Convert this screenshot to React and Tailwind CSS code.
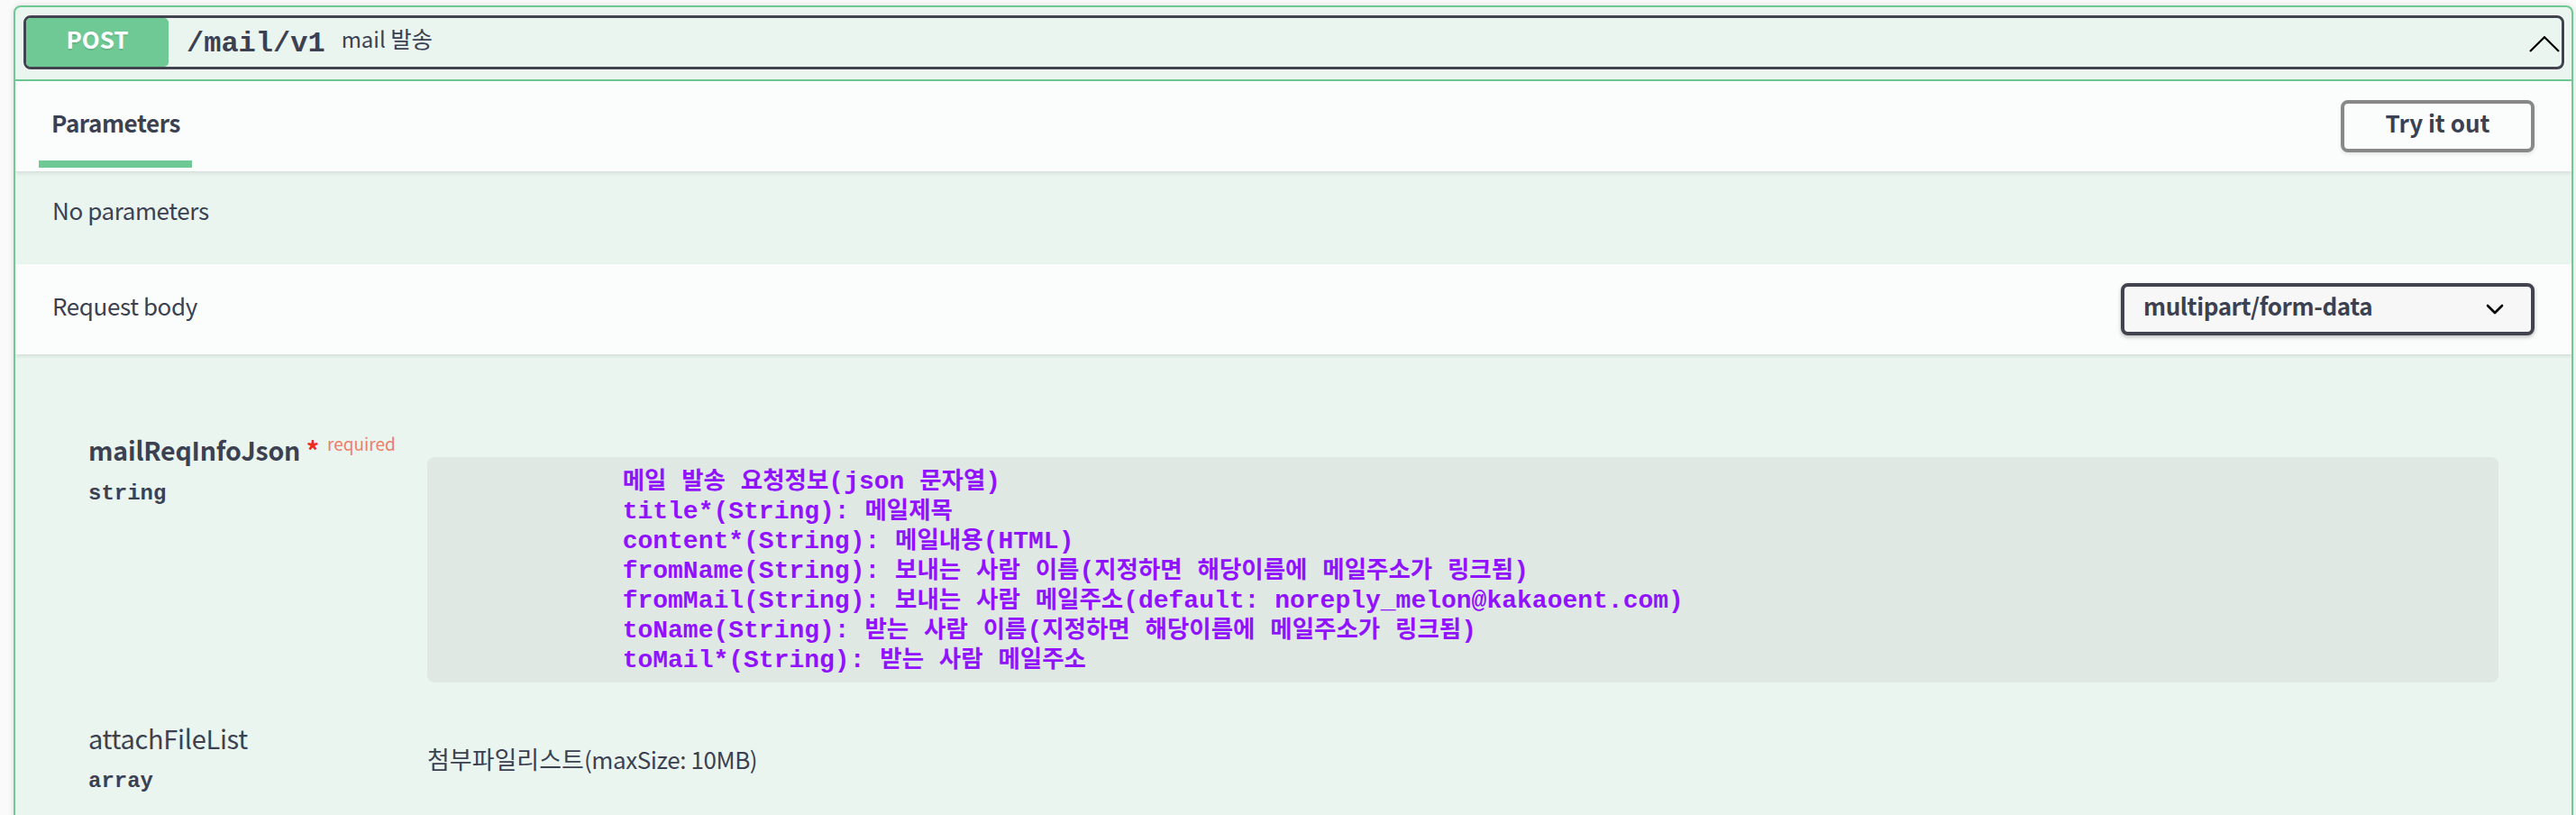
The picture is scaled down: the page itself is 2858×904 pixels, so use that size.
import React from "react";

const HANGUL_SPLIT = /([\uAC00-\uD7A3\u3131-\u318E]+)/;
const HANGUL_TEST = /[\uAC00-\uD7A3\u3131-\u318E]/;

function K({ text, cls }) {
  return text.split(HANGUL_SPLIT).map((part, i) =>
    HANGUL_TEST.test(part) ? (
      <span key={i} className={cls}>
        {part}
      </span>
    ) : (
      <React.Fragment key={i}>{part}</React.Fragment>
    )
  );
}

const SANS_KO = "text-[27px] leading-none tracking-normal";
const DESC_KO = "text-[25.5px] leading-none tracking-normal";
const CODE_KO = "inline-block font-['Noto_Sans_CJK_KR',sans-serif] text-[26.5px] leading-[24px] font-bold";

const codeLines = [
  "            메일 발송 요청정보(json 문자열)",
  "            title*(String): 메일제목",
  "            content*(String): 메일내용(HTML)",
  "            fromName(String): 보내는 사람 이름(지정하면 해당이름에 메일주소가 링크됨)",
  "            fromMail(String): 보내는 사람 메일주소(default: noreply_melon@kakaoent.com)",
  "            toName(String): 받는 사람 이름(지정하면 해당이름에 메일주소가 링크됨)",
  "            toMail*(String): 받는 사람 메일주소",
];

export default function App() {
  return (
    <div className="bg-[#fafafa] pt-[6px] pl-[15px] pr-[3px] pb-[20px] font-['Noto_Sans_CJK_KR',sans-serif] text-[#3b4151]">
      <div className="border-2 border-[#6fc994] rounded-[8px] bg-[#ebf5f0] shadow-[0_0_6px_rgba(0,0,0,0.12)] overflow-hidden">
        {/* Summary */}
        <div className="pt-[9px] pb-[11px] pl-[9px] pr-[8px] border-b-2 border-[#6fc994]">
          <div className="h-[60px] flex items-stretch border-[3px] border-[#41444e] rounded-[8px] shadow-[0_0_0_1px_rgba(255,255,255,0.9)]">
            <div className="w-[158px] shrink-0 bg-[#6fc994] rounded-[5px] flex items-center justify-center">
              <span className="text-white font-bold text-[26px] leading-[28px] mb-[8px] [text-shadow:0_2px_0_rgba(0,0,0,0.1)]">
                POST
              </span>
            </div>
            <span className="self-center ml-[20px] mt-[3px] font-['Liberation_Mono',monospace] font-bold text-[32px] leading-[32px]">
              /mail/v1
            </span>
            <span className="self-center ml-[18px] mb-[9px] text-[24px] leading-[26px]">
              <K text="mail 발송" cls={DESC_KO} />
            </span>
            <svg
              className="ml-auto self-center mr-[2px] mt-[3px]"
              width="34"
              height="18"
              viewBox="0 0 34 18"
              fill="none"
            >
              <path d="M1 17 L17 1.2 L33 17" stroke="#000" strokeWidth="2.2" />
            </svg>
          </div>
        </div>

        {/* Parameters header */}
        <div className="relative z-10 h-[100px] bg-[#fbfdfc] shadow-[0_2px_4px_rgba(0,0,0,0.1)] flex items-stretch justify-between pl-[26px] pr-[41px]">
          <div className="flex flex-col">
            <div className="pt-[32px] pl-[14px] pr-[13px] text-[26px] leading-[28px] tracking-[-0.4px] font-bold">
              Parameters
            </div>
            <div className="mt-auto mb-[4px] h-[8px] bg-[#6fc994]" />
          </div>
          <div className="self-center w-[215px] h-[58px] border-4 border-[#888888] rounded-[8px] shadow-[0_2px_4px_rgba(0,0,0,0.1)] flex items-center justify-center pb-[9px]">
            <span className="text-[26px] leading-[28px] font-bold">Try it out</span>
          </div>
        </div>

        {/* No parameters */}
        <div className="h-[103px] pt-[29px] pl-[41px] text-[26px] leading-[28px] tracking-[-0.4px]">
          No parameters
        </div>

        {/* Request body header */}
        <div className="relative z-10 h-[100px] bg-[#fbfdfc] shadow-[0_2px_4px_rgba(0,0,0,0.1)] flex items-center justify-between pl-[41px] pr-[41px]">
          <span className="text-[26px] leading-[28px] tracking-[-0.4px] mb-[9px]">Request body</span>
          <div className="w-[459px] h-[58px] border-4 border-[#41444e] rounded-[8px] bg-[#f7f7f7] shadow-[0_2px_4px_rgba(0,0,0,0.25)] flex items-center justify-between pl-[21px] pr-[30px]">
            <span className="text-[26px] leading-[28px] tracking-[-0.4px] font-bold mb-[9px]">
              multipart/form-data
            </span>
            <svg width="20" height="12" viewBox="0 0 20 12" fill="none">
              <path
                d="M2 2 L10 10 L18 2"
                stroke="#000"
                strokeWidth="2.6"
                strokeLinecap="round"
                strokeLinejoin="round"
              />
            </svg>
          </div>
        </div>

        {/* Body */}
        <div className="pt-[84px] pl-[81px] pr-[81px] pb-[40px]">
          <div className="flex">
            <div className="w-[376px] shrink-0">
              <div className="mt-[2px] text-[28.5px] leading-[40px] tracking-[-0.2px] font-bold whitespace-nowrap">
                mailReqInfoJson
                <span className="text-[#ef2a1f] tracking-normal">{"\u00a0*"}</span>
                <span className="text-[19px] leading-none tracking-normal font-normal text-[#ee7d6c] pl-[9px] align-[11px]">
                  required
                </span>
              </div>
              <div className="mt-[14px] font-['Liberation_Mono',monospace] font-bold text-[24px] leading-[30px]">
                string
              </div>
            </div>
            <div className="flex-1 mt-[30px]">
              <pre className="bg-[#e0e8e3] rounded-[8px] pt-[11px] pb-[8px] pl-[15px] font-['Liberation_Mono','Noto_Sans_CJK_KR',monospace] font-bold text-[28px] leading-[33px] text-[#9012fe] whitespace-pre">
                {codeLines.map((line, i) => (
                  <div key={i}>
                    <K text={line} cls={CODE_KO} />
                  </div>
                ))}
              </pre>
            </div>
          </div>

          <div className="flex mt-[39px]">
            <div className="w-[376px] shrink-0">
              <div className="mt-[2px] text-[29px] leading-[40px] tracking-[-0.3px]">attachFileList</div>
              <div className="mt-[14px] font-['Liberation_Mono',monospace] font-bold text-[24px] leading-[30px]">
                array
              </div>
            </div>
            <div className="flex-1 mt-[32px] text-[26px] leading-[28px] tracking-[-0.4px]">
              <K text="첨부파일리스트(maxSize: 10MB)" cls={SANS_KO} />
            </div>
          </div>
        </div>
      </div>
    </div>
  );
}
